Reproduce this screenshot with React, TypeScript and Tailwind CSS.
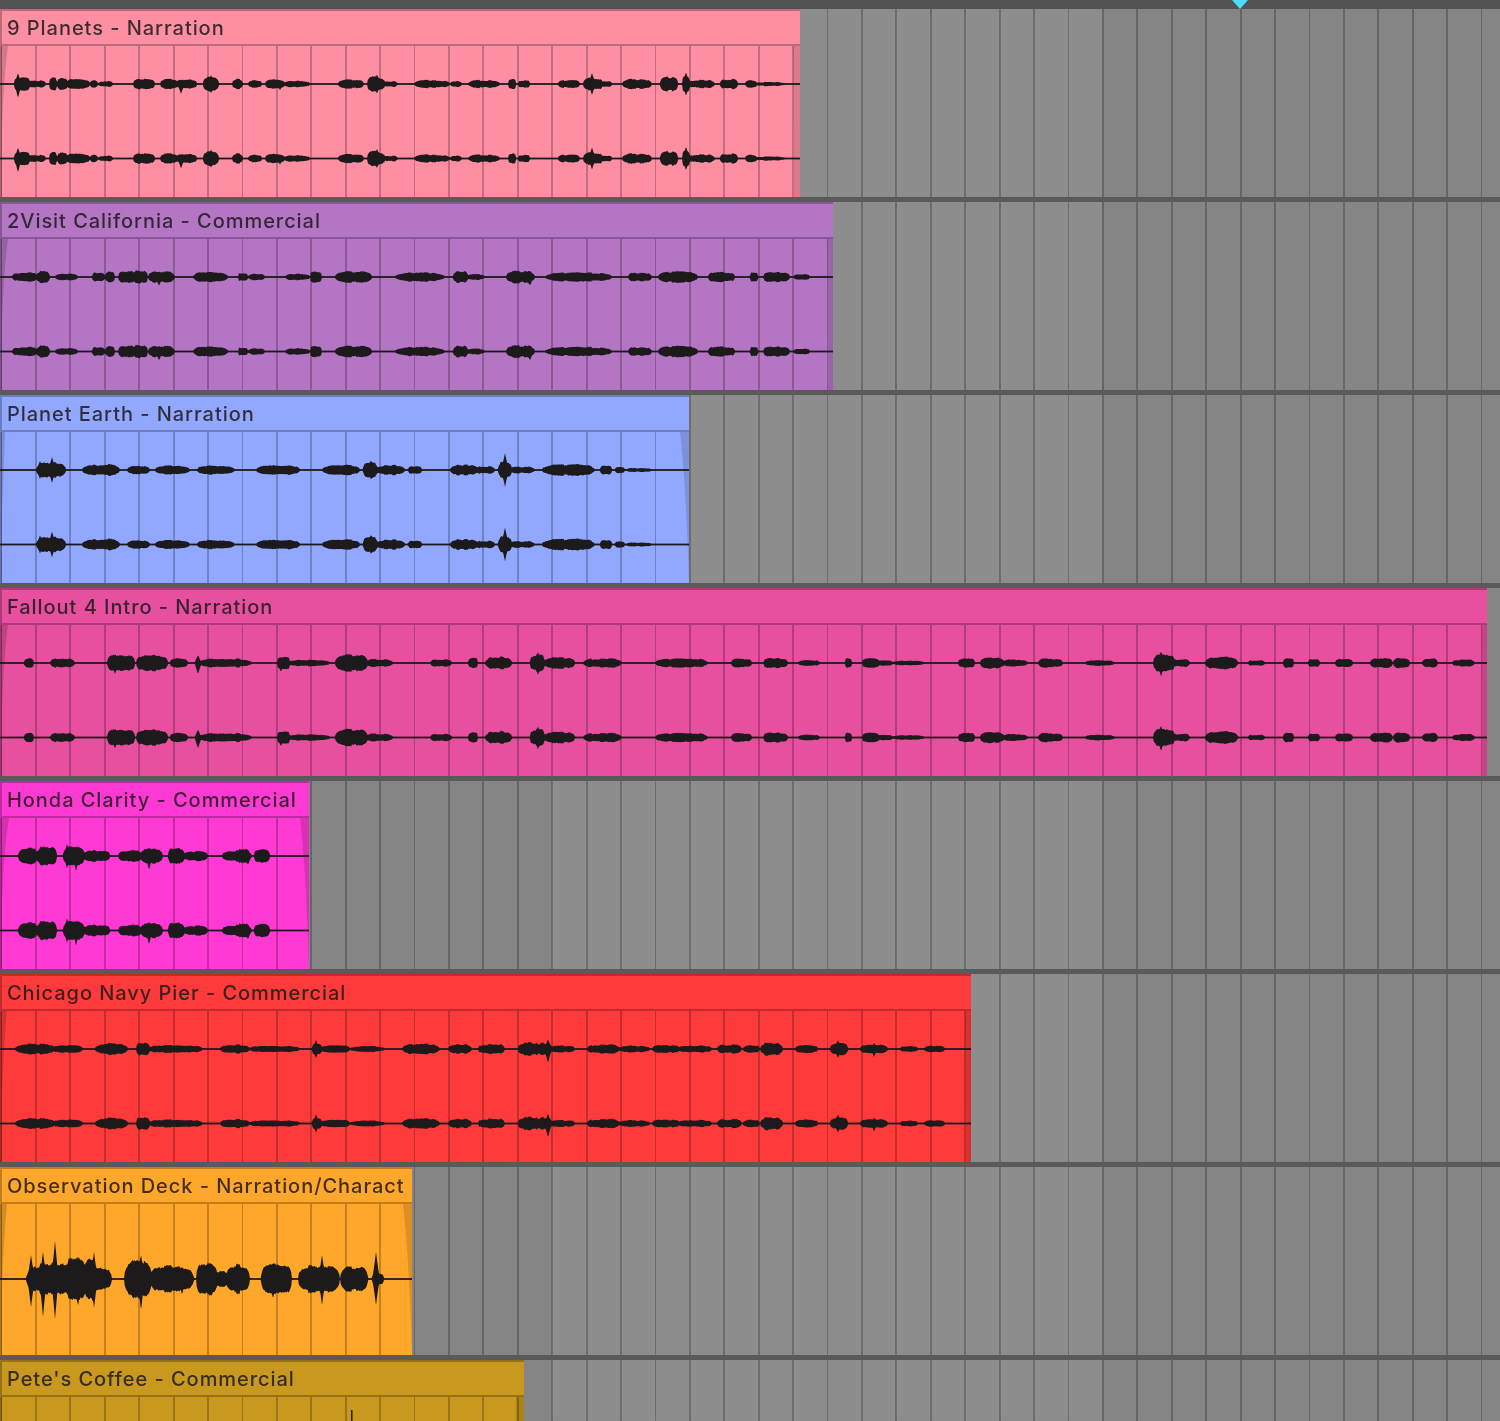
type Blob = [number, number, number];
type Spike = [number, number, number];

type Clip = {
  title: string;
  widthClass: string;
  colorClass: string;
  end: number;
  leftFade: number;
  rightFade: number;
  taper: boolean;
  centers: number[];
  blobs: Blob[];
  spikes: Spike[];
};

const clips: Clip[] = [
  {
    title: "9 Planets - Narration",
    widthClass: "w-[800px]",
    colorClass: "bg-[#fe8fa2]",
    end: 800,
    leftFade: 6,
    rightFade: 7,
    taper: false,
    centers: [38, 112.5],
    blobs: [[14,30,6.5],[28,46,3],[49,57,5.5],[57,68,5.5],[66,90,4.5],[90,98,3.5],[98,113,2.5],[133,155,4.5],[160,178,4.5],[176,197,4.5],[203,219,6.5],[232,243,4.5],[248,262,3.5],[265,285,4.5],[283,310,3],[338,364,4],[367,385,6.5],[383,398,2.5],[414,450,3.5],[450,462,2.5],[468,500,3.5],[508,516,4.5],[518,530,3.5],[558,580,3.5],[583,603,5.5],[601,612,2.5],[622,652,4.5],[660,678,6.5],[682,690,7],[688,715,3.5],[720,738,4.5],[745,757,3.5],[755,785,1.8]],
    spikes: [[18,11,14],[181,4,10],[211,9,9],[280,3,6],[377,10,10],[592,11,11],[667,8,8],[686,12,12]],
  },
  {
    title: "2Visit California - Commercial",
    widthClass: "w-[833px]",
    colorClass: "bg-[#b375c4]",
    end: 833,
    leftFade: 6,
    rightFade: 6,
    taper: false,
    centers: [38, 112.5],
    blobs: [[12,38,4],[36,50,5],[55,78,3],[92,105,4.5],[105,115,4.5],[118,135,5.5],[133,148,5.5],[148,175,5],[193,228,4.5],[238,248,4],[248,265,3],[285,310,3],[310,322,5.5],[335,372,5],[395,445,4],[453,468,5],[466,485,2.5],[506,535,5.5],[545,612,4],[628,652,4],[658,698,5],[708,735,4.5],[750,758,4.5],[763,790,4.5],[793,810,2.5]],
    spikes: [[136,7,5],[159,3,9],[530,6,9]],
  },
  {
    title: "Planet Earth - Narration",
    widthClass: "w-[689px]",
    colorClass: "bg-[#92a8ff]",
    end: 689,
    leftFade: 3,
    rightFade: 9,
    taper: true,
    centers: [38, 112.5],
    blobs: [[36,66,6.5],[82,120,5],[127,150,3.5],[155,190,4],[197,235,4],[256,300,4.5],[322,360,4.5],[363,378,6.5],[376,405,4.5],[408,422,3.5],[450,478,4.5],[476,495,3.5],[498,512,7],[510,535,3],[542,595,5],[600,612,4],[615,625,3],[626,652,1.8]],
    spikes: [[40,9,9],[52,13,13],[371,10,10],[505,17,17]],
  },
  {
    title: "Fallout 4 Intro - Narration",
    widthClass: "w-[1487px]",
    colorClass: "bg-[#e6509f]",
    end: 1487,
    leftFade: 6,
    rightFade: 6,
    taper: false,
    centers: [38, 112.5],
    blobs: [[24,34,4],[50,75,4],[107,135,7.5],[136,168,7],[170,188,4.5],[199,252,4],[277,290,6.5],[288,330,3],[335,368,7.5],[366,393,3.5],[430,452,3.5],[468,478,4.5],[485,512,5.5],[530,545,7.5],[543,575,5],[583,622,4],[655,708,4],[731,752,4],[763,788,4.5],[798,820,2.5],[845,852,4.5],[862,880,4.5],[878,893,2.5],[891,925,2],[958,975,4.5],[980,1005,5],[1003,1028,3],[1038,1063,4],[1085,1115,2.5],[1153,1175,7.5],[1173,1190,3.5],[1205,1238,5.5],[1248,1265,2.5],[1283,1294,4.5],[1308,1320,3.5],[1335,1353,3.5],[1370,1393,4.5],[1393,1410,4.5],[1422,1438,4],[1452,1475,3]],
    spikes: [[115,8,11],[198,8,11],[281,6,9],[347,8,9],[538,11,12],[1161,12,14]],
  },
  {
    title: "Honda Clarity - Commercial",
    widthClass: "w-[309px]",
    colorClass: "bg-[#ff39d4]",
    end: 309,
    leftFade: 7,
    rightFade: 9,
    taper: true,
    centers: [38, 112.5],
    blobs: [[18,38,7],[36,57,8],[63,85,8.5],[83,110,5.5],[118,142,5],[140,163,6.5],[168,185,7.5],[183,208,4.5],[222,252,5],[238,250,7.5],[254,270,6.5]],
    spikes: [[67,12,12],[76,4,15],[149,9,14],[248,6,9]],
  },
  {
    title: "Chicago Navy Pier - Commercial",
    widthClass: "w-[971px]",
    colorClass: "bg-[#ff3a3a]",
    end: 971,
    leftFade: 5,
    rightFade: 6,
    taper: false,
    centers: [38, 112.5],
    blobs: [[15,55,4.5],[53,83,3.5],[95,128,5],[136,150,5.5],[148,203,3.5],[220,250,4],[248,300,3],[312,322,5.5],[320,350,3.5],[350,385,2.5],[402,440,4.5],[448,472,4],[478,505,4.5],[518,540,6],[538,552,5.5],[550,575,3],[587,620,4],[618,650,3],[652,680,3.5],[678,712,3],[717,742,4],[743,760,3.5],[760,783,5.5],[795,818,3.5],[830,848,5.5],[860,888,4],[900,918,2.5],[924,945,3]],
    spikes: [[316,9,9],[548,10,14],[767,6,8],[838,9,9],[874,6,8]],
  },
  {
    title: "Observation Deck - Narration/Charact",
    widthClass: "w-[412px]",
    colorClass: "bg-[#ffa72a]",
    end: 412,
    leftFade: 5,
    rightFade: 9,
    taper: true,
    centers: [75],
    blobs: [[26,112,14],[64,88,19],[84,96,20],[124,152,16],[150,194,12],[196,218,14],[216,228,8],[226,250,13],[261,292,15],[298,340,13],[340,368,11],[372,384,6]],
    spikes: [[31,24,28],[43,27,38],[55,38,40],[78,24,28],[94,27,29],[141,25,32],[182,13,16],[207,15,13],[235,13,14],[273,15,20],[322,24,26],[347,13,14],[376,27,26]],
  },
];

const WAVE = "#1d1a1c";

function noise(x: number) {
  const v = Math.sin(x * 12.9898) * 43758.5453;
  return v - Math.floor(v);
}

function wavePoints(clip: Clip, cy: number) {
  const upper: string[] = [];
  const lower: string[] = [];
  for (let x = 4; x < clip.end; x += 0.75) {
    let amp = 0;
    for (const [a, b, h] of clip.blobs) {
      if (x <= a || x >= b) continue;
      const t = (x - (a + b) / 2) / ((b - a) / 2);
      const v = h * Math.sqrt(1 - t * t * t * t);
      if (v > amp) amp = v;
    }
    const lumpy = 0.88 + 0.3 * noise(Math.floor(x / 4) + 3);
    let up = amp * lumpy * (0.94 + 0.12 * noise(x));
    let down = amp * lumpy * (0.94 + 0.12 * noise(x + 7));
    for (const [sx, su, sd] of clip.spikes) {
      const d = Math.abs(x - sx);
      if (d < 3.5) {
        up = Math.max(up, su * (1 - d / 3.5));
        down = Math.max(down, sd * (1 - d / 3.5));
      }
    }
    upper.push(`${x},${(cy - up).toFixed(2)}`);
    lower.unshift(`${x},${(cy + down).toFixed(2)}`);
  }
  return [...upper, ...lower].join(" ");
}

const beatLines =
  "bg-[image:repeating-linear-gradient(90deg,transparent_2.42px,transparent_35px,rgba(0,0,0,0.23)_35px,rgba(0,0,0,0.23)_36.84px)]";

function ClipBody({ clip }: { clip: Clip }) {
  const H = 151;
  const e = clip.end;
  const rf = clip.rightFade;
  const rightPath = clip.taper
    ? `M${e - rf},0 L${e},0 L${e},${H} Q${e - 3},${H * 0.35} ${e - rf},0 Z`
    : `M${e - rf},0 L${e},0 L${e},${H} L${e - rf + 1},${H} Q${e - rf + 1},${H * 0.3} ${e - rf},0 Z`;
  return (
    <div className={`flex-1 min-h-0 ${beatLines}`}>
      <svg width={e} height={H} className="block">
        <rect x="0" y="0" width="2" height={H} fill="rgba(0,0,0,0.3)" />
        <path d={`M2,0 L${2 + clip.leftFade},0 Q4,${H * 0.2} 2,${H * 0.55} Z`} fill="rgba(0,0,0,0.16)" />
        <path d={rightPath} fill="rgba(0,0,0,0.14)" />
        {clip.centers.map((cy) => (
          <g key={cy}>
            <rect x="0" y={cy - 0.9} width={e} height="1.8" fill={WAVE} />
            <polygon points={wavePoints(clip, cy)} fill={WAVE} />
          </g>
        ))}
      </svg>
    </div>
  );
}

const laneBackground =
  "bg-[image:repeating-linear-gradient(90deg,transparent_2.42px,transparent_35px,rgba(0,0,0,0.23)_35px,rgba(0,0,0,0.23)_36.84px),linear-gradient(90deg,#858585_551px,#8d8d8d_551px,#8d8d8d_1102px,#858585_1102px)]";

function ClipHeader({ title }: { title: string }) {
  return (
    <div className="h-[35px] shrink-0 border-b-2 border-l-2 border-black/25 pl-[5px] overflow-hidden whitespace-nowrap font-['Inter',sans-serif] font-medium text-[20px] leading-[35px] tracking-[0.95px] text-[#1d1a1c]/85">
      {title}
    </div>
  );
}

function Lane({ clip }: { clip: Clip }) {
  return (
    <div className={`h-[188px] shrink-0 overflow-hidden ${laneBackground}`}>
      <div className={`${clip.widthClass} ${clip.colorClass} h-full flex flex-col border-t-2 border-black/25`}>
        <ClipHeader title={clip.title} />
        <ClipBody clip={clip} />
      </div>
    </div>
  );
}

export default function App() {
  return (
    <div className="w-[1500px] h-[1421px] overflow-hidden bg-[#5a5a5a] blur-[0.6px]">
      <div className="relative h-[9px] bg-[#525252]">
        <svg width="18" height="9" className="absolute left-[1231px] top-0">
          <polygon points="1,0 17,0 9,9" fill="#4fdcff" />
        </svg>
      </div>
      <div className="flex flex-col gap-[5px]">
        {clips.map((clip) => (
          <Lane key={clip.title} clip={clip} />
        ))}
        <div className={`h-[61px] shrink-0 overflow-hidden ${laneBackground}`}>
          <div className="w-[524px] h-full bg-[#c9981f] flex flex-col border-t-2 border-black/25">
            <ClipHeader title="Pete's Coffee - Commercial" />
            <div className={`flex-1 min-h-0 ${beatLines}`}>
              <svg width="524" height="24" className="block">
                <rect x="0" y="0" width="2" height="24" fill="rgba(0,0,0,0.3)" />
                <rect x="516" y="0" width="8" height="24" fill="rgba(0,0,0,0.15)" />
                <rect x="351" y="13" width="1.5" height="11" fill={WAVE} />
              </svg>
            </div>
          </div>
        </div>
      </div>
    </div>
  );
}
